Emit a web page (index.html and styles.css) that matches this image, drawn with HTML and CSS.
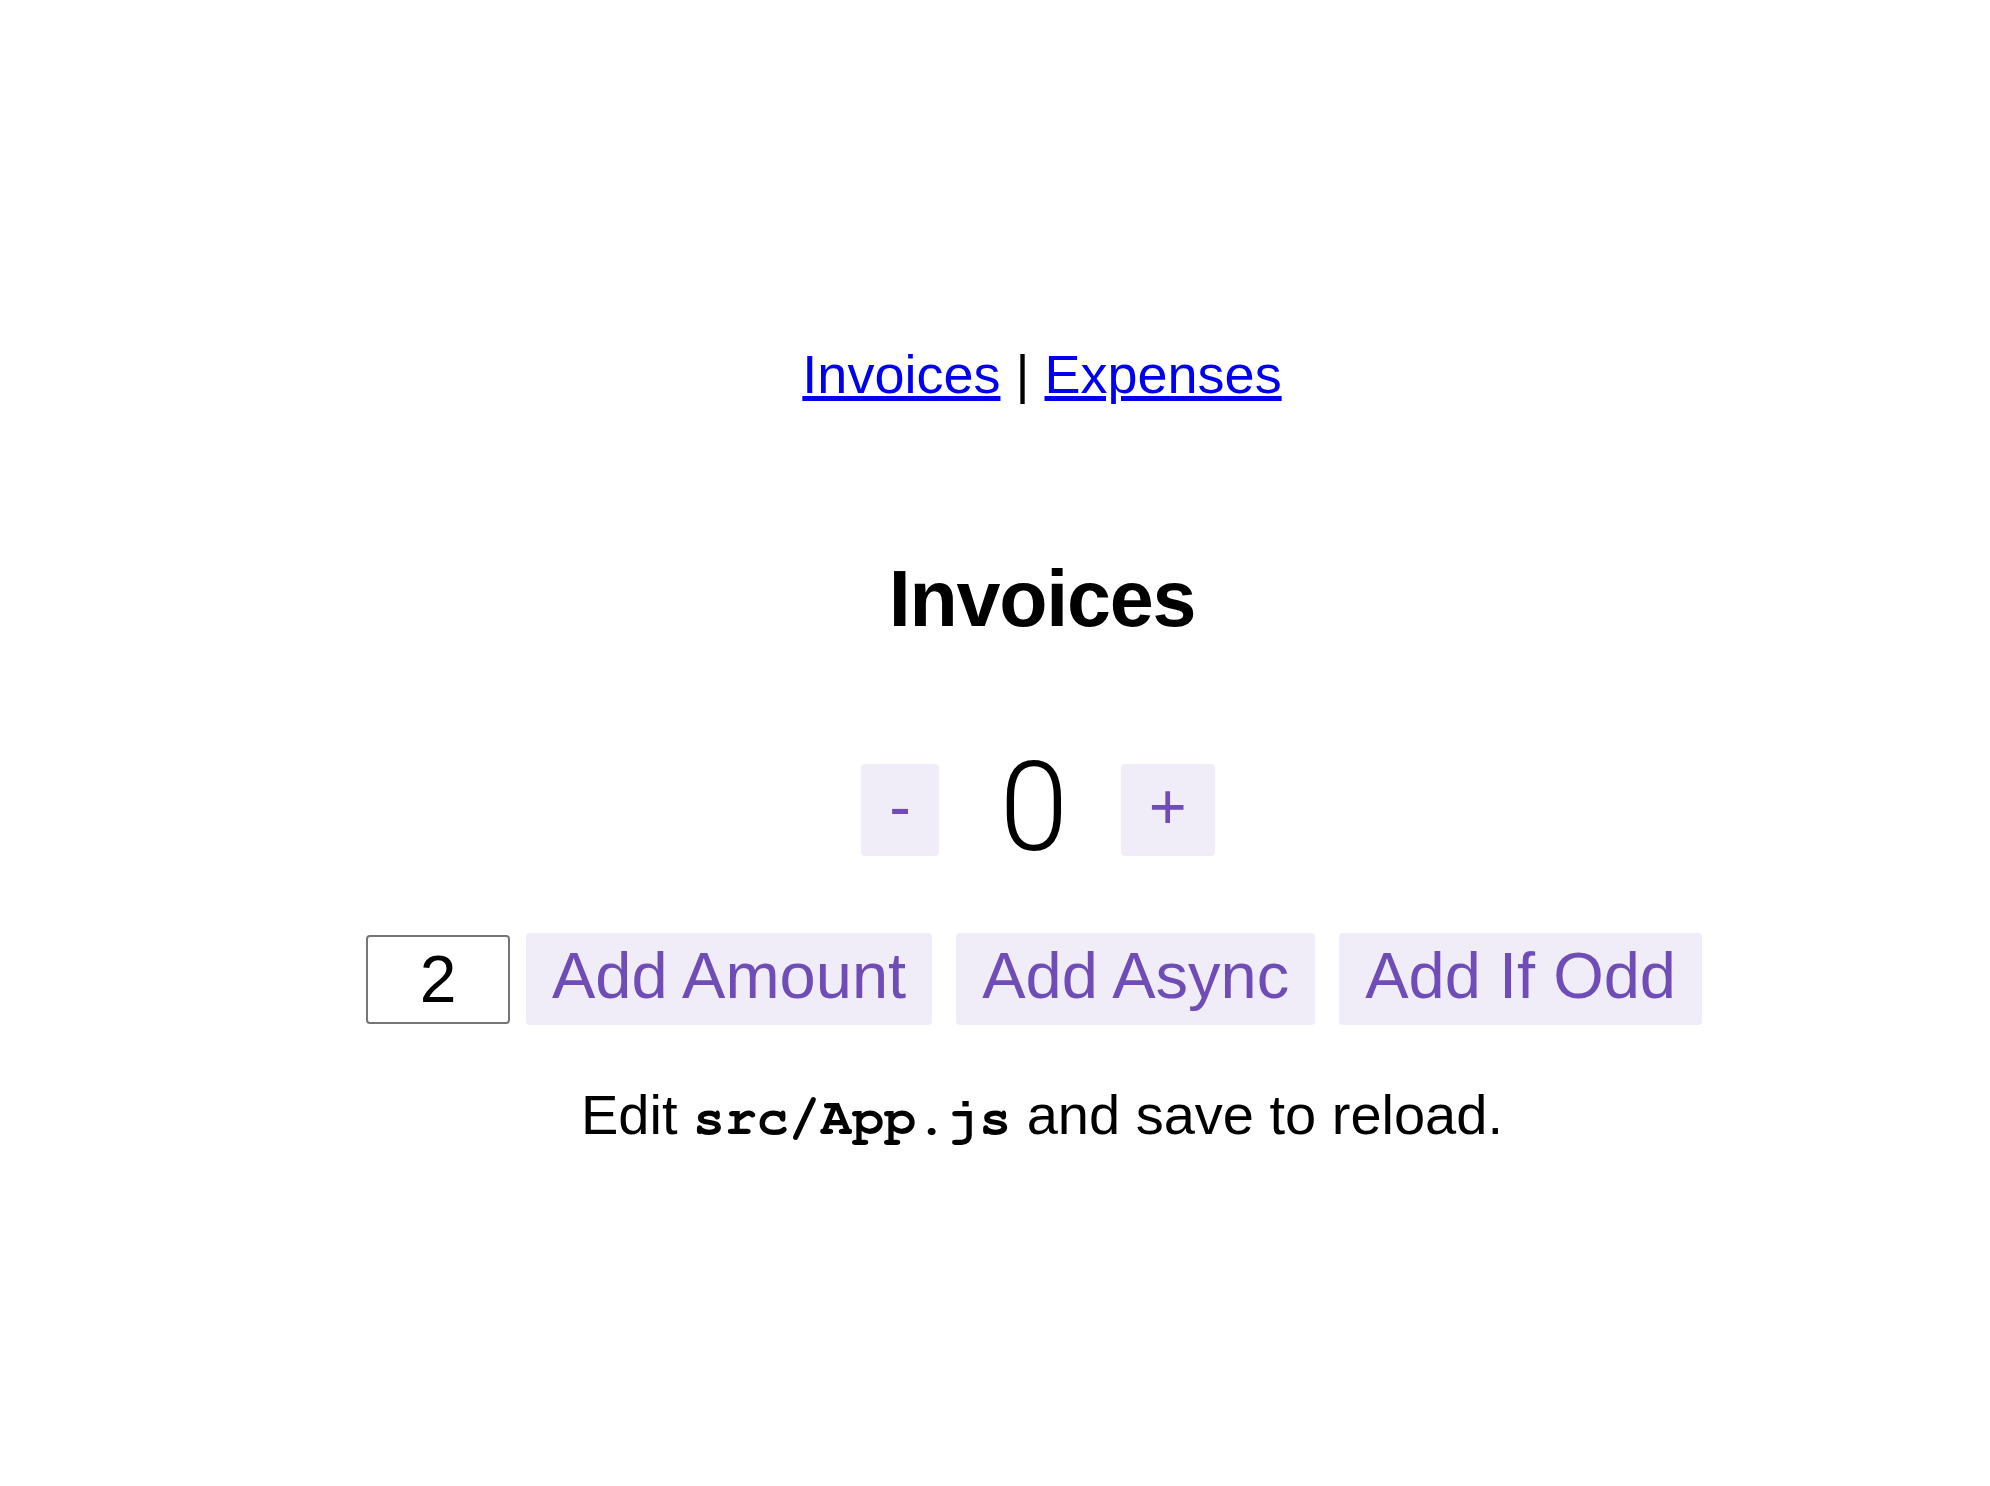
FILE: index.html
```html
<!DOCTYPE html>
<html lang="en">
<head>
<meta charset="utf-8">
<title>Invoices</title>
<link rel="stylesheet" href="styles.css">
</head>
<body>
<div class="app">
  <nav class="nav"><a class="nav-link" href="#">Invoices</a> | <a class="nav-link" href="#">Expenses</a></nav>
  <h2 class="title">Invoices</h2>
  <div class="counter">
    <div class="row row-counter">
      <button class="button button-sym" aria-label="Decrement value">-</button>
      <span class="value">0</span>
      <button class="button button-sym" aria-label="Increment value">+</button>
    </div>
    <div class="row row-actions">
      <input class="textbox" aria-label="Set increment amount" value="2">
      <button class="button">Add Amount</button>
      <button class="button">Add Async</button>
      <button class="button">Add If Odd</button>
    </div>
  </div>
  <p class="hint">Edit <code class="code">src/App.js</code> and save to reload.</p>
</div>
</body>
</html>
```

FILE: styles.css
```css
html, body {
  margin: 0;
  padding: 0;
  background: #ffffff;
}

body {
  font-family: "Liberation Sans", Arial, Helvetica, sans-serif;
  color: #000000;
}

.app {
  display: flex;
  flex-direction: column;
  align-items: center;
  text-align: center;
  padding: 343px 0 0 94px;
}

.nav {
  font-size: 54px;
  line-height: 62px;
}

.nav-link {
  color: #0000ee;
  text-decoration: underline;
}

.title {
  margin: 148px 0 0;
  font-size: 79px;
  line-height: 91px;
  font-weight: 700;
  letter-spacing: -1.2px;
}

.counter {
  display: flex;
  flex-direction: column;
  align-items: center;
}

.row {
  display: flex;
  align-items: center;
  justify-content: center;
}

.row-counter {
  margin-top: 93px;
}

.row-actions {
  margin-top: 50px;
}

.value {
  display: inline-block;
  width: 94px;
  padding: 0 32px;
  margin-bottom: 4px;
  font-family: "Roboto", "Lato", "Liberation Sans", sans-serif;
  font-weight: 300;
  font-size: 124px;
  line-height: 142px;
  text-align: center;
}

.button {
  appearance: none;
  font-family: "Liberation Sans", Arial, Helvetica, sans-serif;
  font-size: 65px;
  line-height: normal;
  color: #704cb6;
  background-color: rgba(112, 76, 182, 0.1);
  border: 2px solid transparent;
  border-radius: 4px;
  padding: 3px 24px 10px;
  margin: 0 16px 0 8px;
  cursor: pointer;
}

.button-sym {
  padding-left: 26px;
  padding-right: 26px;
}

.textbox {
  box-sizing: border-box;
  width: 144px;
  font-family: "Liberation Sans", Arial, Helvetica, sans-serif;
  font-size: 66px;
  line-height: normal;
  color: #000000;
  text-align: center;
  border: 2px solid #767676;
  border-radius: 4px;
  padding: 4px 4px 5px;
  margin: 0 8px 0 0;
  background: #ffffff;
}

.hint {
  margin: 59px 0 0;
  font-size: 56px;
  line-height: 62px;
}

.code {
  font-family: "Nimbus Mono PS", "FreeMono", "Liberation Mono", monospace;
  font-weight: 700;
  font-size: 53px;
}
```
